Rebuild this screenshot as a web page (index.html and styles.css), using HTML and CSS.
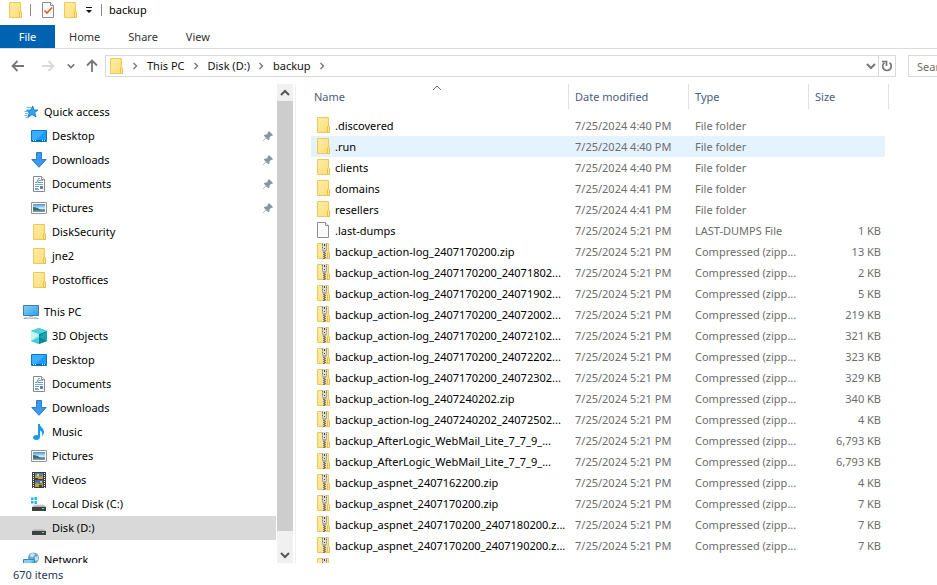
FILE: index.html
```
<!DOCTYPE html>
<html lang="en">
<head>
<meta charset="utf-8">
<title>backup</title>
<link rel="stylesheet" href="styles.css">
</head>
<body>
<svg class="sprite" aria-hidden="true">
  <defs>
    <linearGradient id="gFolder" x1="0" y1="0" x2="1" y2="1"><stop offset="0" stop-color="#ffeca6"/><stop offset="1" stop-color="#fddd77"/></linearGradient>
    <linearGradient id="gScreen" x1="0" y1="0" x2="1" y2="1"><stop offset="0" stop-color="#83d1fb"/><stop offset="1" stop-color="#2a9ff0"/></linearGradient>
    <linearGradient id="gDrive" x1="0" y1="0" x2="0" y2="1"><stop offset="0" stop-color="#d5d5d5"/><stop offset="1" stop-color="#a8a8a8"/></linearGradient>
    <linearGradient id="gPhoto" x1="0" y1="0" x2="0" y2="1"><stop offset="0" stop-color="#4a90dc"/><stop offset=".55" stop-color="#d6ecfa"/><stop offset="1" stop-color="#5d9bc4"/></linearGradient>
  </defs>
  <symbol id="folder" viewBox="0 0 16 16"><path d="M2.5.5h11v11h1v4h-12z" fill="url(#gFolder)" stroke="#edca58"/><path d="M12.5 15.5V9.8l1-.8 1 .8v5.7z" fill="#ffe79a" stroke="#e6c04a"/></symbol>
  <symbol id="zip" viewBox="0 0 16 16"><path d="M2.5.5h11v11h1v4h-12z" fill="url(#gFolder)" stroke="#edca58"/><path d="M12.5 15.5V9.8l1-.8 1 .8v5.7z" fill="#ffe79a" stroke="#e6c04a"/><path d="M7 0h5v7l-1 2H8L7 7z" fill="#a9a9a9"/><path d="M8 0h3v7H8z" fill="#dcdcdc"/><path d="M9 1h1v2H9zM9 5h1v1H9z" fill="#454545"/><path d="M7 1h1v1H7zM11 2h1v1h-1zM7 4h1v1H7z" fill="#777"/><path d="M8 9h2v1H8zM9 10h2v1H9zM8 11h2v1H8zM9 12h2v1H9zM8 13h2v1H8zM9 14h2v1H9zM8 15h2v1H8z" fill="#777"/><path d="M10 9h1v1h-1zM8 10h1v1H8zM10 11h1v1h-1zM8 12h1v1H8zM10 13h1v1h-1zM8 14h1v1H8z" fill="#cfcfcf"/></symbol>
  <symbol id="file" viewBox="0 0 16 16"><path d="M2.500.5h8l3 3v12h-11z" fill="#fafafa" stroke="#8e8e8e"/><path d="M10.500.5v3h3" fill="#fff" stroke="#8e8e8e"/></symbol>
  <symbol id="check" viewBox="0 0 16 16"><path d="M2.500.5h8l3 3v12h-11z" fill="#fafafa" stroke="#8c8c8c"/><path d="M10.500.5v3h3" fill="#fff" stroke="#8c8c8c"/><path d="M4.500 8.500 7 11l5-5.500" fill="none" stroke="#ec5b25" stroke-width="1.700"/></symbol>
  <symbol id="star" viewBox="0 0 16 16"><path d="m9.800 2 1.300 4H15l-3.200 2.500L13 13l-4-2.400L4.800 13.500 6.300 9 3.500 6.200l4-.2z" fill="#2ba6ee" stroke="#1272bb" stroke-width=".8"/><path d="M3.500 3.500h5M1.500 7.500h3.500M2.500 9.500h3M1.500 11.500h3M2.500 13.500H5" stroke="#69bde9"/></symbol>
  <symbol id="desktop" viewBox="0 0 16 16"><path d="M.5 2.500h15v11H.5z" fill="#199bf9" stroke="#0a76cb"/><path d="M1 3h13L5 12H1z" fill="#3badff"/><path d="M1 12h14v1H1z" fill="#0865b0"/><path d="M2 12h1v1H2zM4 12h1v1H4zM11 12h1v1h-1zM13 12h1v1h-1z" fill="#fff"/></symbol>
  <symbol id="download" viewBox="0 0 16 16"><path d="M5.500.5h5v7h4.700L8 15.300.8 7.500h4.700z" fill="#3b9af0" stroke="#2c7fca"/></symbol>
  <symbol id="document" viewBox="0 0 16 16"><path d="M2.500.5h8l3 3v12h-11z" fill="#fdfdfd" stroke="#8a8a8a"/><path d="M10.500.5v3h3" fill="#fff" stroke="#8a8a8a"/><path d="M7 2.500h2M8 4.500h4M4 8.500h8M4 13.500h4" stroke="#8aa3b7"/><path d="M4 6.500h2l1-3v3h5M4 10.500h4M4 12.500h3" fill="none" stroke="#5b9fd0"/><path d="M9 10h3v3H9z" fill="#568ea6"/></symbol>
  <symbol id="picture" viewBox="0 0 16 16"><path d="M.5 2.500h15v11H.5z" fill="#fff" stroke="#949494"/><path d="M2 4h12v8H2z" fill="url(#gPhoto)"/><path d="M2 7c3 0 5 1.500 7 2.300 2 .3 4 .2 5 .2V11H2z" fill="#3c7160"/><path d="M2 10.500h12V12H2z" fill="#6b9fc5"/></symbol>
  <symbol id="pc" viewBox="0 0 16 16"><path d="M.5 1.500h15v10H.5z" fill="url(#gScreen)" stroke="#4d7998"/><path d="M6 12h4v1H6z" fill="#b4c2cd"/><path d="M2 13.500h12l2 1.500H0z" fill="#8ea3b4"/><path d="M3 14h10" stroke="#dfe6eb"/></symbol>
  <symbol id="cube" viewBox="0 0 16 16"><path d="M0 3 8 0l8 3v10l-8 3-8-3z" fill="#20bccb"/><path d="m0 3 8 3v10l-8-3z" fill="#9ee8ed"/><path d="m0 3 8 3-8 7z" fill="#c9f4f5"/><path d="m0 13 8-4v7z" fill="#45ccd5"/><path d="m8 6 8-3v10l-8 3z" fill="#0b8495"/><path d="m16 3-8 6 8 4z" fill="#15a4b5"/><path d="m0 3 8-3 8 3-8 3z" fill="#4fd0dc"/></symbol>
  <symbol id="music" viewBox="0 0 16 16"><path d="M7 0h2c0 3.500 4 4 4 8 0 1.800-.8 3-2 4 .8-3-.2-5-2-5.500V13c0 2-1.800 3-3.800 3S2 15 2 13.500 3.500 11 5.500 11c.6 0 1 .1 1.500.3z" fill="#159bf0"/></symbol>
  <symbol id="video" viewBox="0 0 16 16"><path d="M1 0h14v16H1z" fill="#3d3d3d"/><path d="M4 1h8v6H4z" fill="#4b82c0"/><path d="M4 8h8v7H4z" fill="#416fa8"/><path d="M4 5c2-3 3-3 4-1s3 0 4-1v4H4zM4 12c2-2 3-2 4 0s3-1 4-1v4H4z" fill="#c69d3f"/><path d="M6 2h2v2H6zM9 9h2v2H9z" fill="#e3c758"/><path d="M4 6h3v1H4zM8 13h3v2H8z" fill="#3a4b35"/><path d="M2.500 1v15M13.500 1v15" stroke="#fff" stroke-dasharray="1 1"/></symbol>
  <symbol id="drive" viewBox="0 0 16 16"><path d="M3.500 8.500h9L15 11H1z" fill="url(#gDrive)"/><path d="M1 11h14v4H1z" fill="#3e4245"/><path d="M11 12h2v1h-2z" fill="#3cff47"/></symbol>
  <symbol id="osdrive" viewBox="0 0 16 16"><path d="M3.500 8.500h9L15 11H1z" fill="url(#gDrive)"/><path d="M1 11h14v4H1z" fill="#3e4245"/><path d="M11 12h2v1h-2z" fill="#3cff47"/><path d="M0 1.500h2.500V4H0zM3.500 1H6v3H3.500zM0 5h2.500v2.500H0zM3.500 5H6v3H3.500z" fill="#1fb8ee"/></symbol>
  <symbol id="network" viewBox="0 0 16 16"><circle cx="10.500" cy="6" r="5.500" fill="#69a9cc"/><path d="M7 3c1.500-2 3-2 4-1.500S12 4 10 5 7 4 7 3zM12 5l3-1v4l-3 1z" fill="#c8e3ef"/><path d="M.5 7.500h11v7H.5z" fill="#4fb2ea" stroke="#3a86b8"/><path d="M1 8h9l-5 6H1z" fill="#86cdf4"/></symbol>
  <symbol id="pin" viewBox="0 0 10 10"><path d="m6 0 4 4-1 1-.8-.2L6.500 6.500 6.300 8.500l-.8.8-2.300-2.100L.6 9.700 0 10l.3-.7 2.500-2.600L.7 4.500l.8-.8 2-.2L5.200 1.800 5 1z" fill="#8796a1"/></symbol>
  <symbol id="chevron" viewBox="0 0 8 8"><path d="m2.500 1 3 3-3 3" fill="none" stroke="currentColor" stroke-width="1.400"/></symbol>
  <symbol id="down" viewBox="0 0 10 10"><path d="m1 3 4 4 4-4" fill="none" stroke="currentColor" stroke-width="2"/></symbol>
  <symbol id="up" viewBox="0 0 10 10"><path d="m1 7 4-4 4 4" fill="none" stroke="currentColor" stroke-width="2"/></symbol>
  <symbol id="arrow" viewBox="0 0 14 14"><path d="M13 7H2M6.500 2 1.500 7l5 5" fill="none" stroke="currentColor" stroke-width="1.800"/></symbol>
  <symbol id="arrowup" viewBox="0 0 14 14"><path d="M7 13V2M2 6.500l5-5 5 5" fill="none" stroke="currentColor" stroke-width="1.800"/></symbol>
  <symbol id="refresh" viewBox="0 0 12 12"><path d="M8.500 2.700A4.300 4.300 0 1 1 3.500 2.700" fill="none" stroke="currentColor" stroke-width="1.700"/><path d="M1 1.500h4.500V6" fill="none" stroke="currentColor" stroke-width="1.700"/></symbol>
</svg>

<header class="titlebar">
  <svg class="icon"><use href="#folder"/></svg>
  <span class="divider"></span>
  <button class="tool" aria-label="Properties"><svg class="icon"><use href="#check"/></svg></button>
  <button class="tool" aria-label="New folder"><svg class="icon"><use href="#folder"/></svg></button>
  <button class="tool customize" aria-label="Customize toolbar"><svg width="8" height="6" viewBox="0 0 8 6"><path d="M1 0h6v1H1zM1 3h6L4 6z" fill="#111"/></svg></button>
  <span class="divider"></span>
  <h1 class="title">backup</h1>
</header>

<nav class="tabs">
  <button class="tab tab-file">File</button>
  <button class="tab">Home</button>
  <button class="tab">Share</button>
  <button class="tab">View</button>
</nav>

<div class="navbar">
  <button class="tool back" aria-label="Back"><svg class="arrow"><use href="#arrow"/></svg></button>
  <button class="tool forward" aria-label="Forward"><svg class="arrow flip"><use href="#arrow"/></svg></button>
  <button class="tool recent" aria-label="Recent"><svg class="small"><use href="#down"/></svg></button>
  <button class="tool parent" aria-label="Up"><svg class="arrow"><use href="#arrowup"/></svg></button>
  <div class="address">
    <svg class="icon"><use href="#folder"/></svg>
    <svg class="small"><use href="#chevron"/></svg>
    <a class="crumb" href="#">This PC</a>
    <svg class="small"><use href="#chevron"/></svg>
    <a class="crumb" href="#">Disk (D:)</a>
    <svg class="small"><use href="#chevron"/></svg>
    <a class="crumb" href="#">backup</a>
    <svg class="small"><use href="#chevron"/></svg>
    <button class="tool history" aria-label="Previous locations"><svg class="caret"><use href="#down"/></svg></button>
    <button class="tool refresh" aria-label="Refresh"><svg class="reload"><use href="#refresh"/></svg></button>
  </div>
  <input class="search" type="text" placeholder="Search backup" aria-label="Search backup">
</div>

<main class="body">
  <nav class="tree">
    <ul class="group">
      <li><a class="node root" href="#"><svg class="icon"><use href="#star"/></svg>Quick access</a></li>
      <li><a class="node" href="#"><svg class="icon"><use href="#desktop"/></svg>Desktop<svg class="pin"><use href="#pin"/></svg></a></li>
      <li><a class="node" href="#"><svg class="icon"><use href="#download"/></svg>Downloads<svg class="pin"><use href="#pin"/></svg></a></li>
      <li><a class="node" href="#"><svg class="icon"><use href="#document"/></svg>Documents<svg class="pin"><use href="#pin"/></svg></a></li>
      <li><a class="node" href="#"><svg class="icon"><use href="#picture"/></svg>Pictures<svg class="pin"><use href="#pin"/></svg></a></li>
      <li><a class="node" href="#"><svg class="icon"><use href="#folder"/></svg>DiskSecurity</a></li>
      <li><a class="node" href="#"><svg class="icon"><use href="#folder"/></svg>jne2</a></li>
      <li><a class="node" href="#"><svg class="icon"><use href="#folder"/></svg>Postoffices</a></li>
    </ul>
    <ul class="group">
      <li><a class="node root" href="#"><svg class="icon"><use href="#pc"/></svg>This PC</a></li>
      <li><a class="node" href="#"><svg class="icon"><use href="#cube"/></svg>3D Objects</a></li>
      <li><a class="node" href="#"><svg class="icon"><use href="#desktop"/></svg>Desktop</a></li>
      <li><a class="node" href="#"><svg class="icon"><use href="#document"/></svg>Documents</a></li>
      <li><a class="node" href="#"><svg class="icon"><use href="#download"/></svg>Downloads</a></li>
      <li><a class="node" href="#"><svg class="icon"><use href="#music"/></svg>Music</a></li>
      <li><a class="node" href="#"><svg class="icon"><use href="#picture"/></svg>Pictures</a></li>
      <li><a class="node" href="#"><svg class="icon"><use href="#video"/></svg>Videos</a></li>
      <li><a class="node" href="#"><svg class="icon"><use href="#osdrive"/></svg>Local Disk (C:)</a></li>
      <li><a class="node selected" href="#"><svg class="icon"><use href="#drive"/></svg>Disk (D:)</a></li>
    </ul>
    <ul class="group">
      <li><a class="node root" href="#"><svg class="icon"><use href="#network"/></svg>Network</a></li>
    </ul>
  </nav>
  <div class="scrollbar">
    <button class="tool step" aria-label="Scroll up"><svg class="caret"><use href="#up"/></svg></button>
    <div class="thumb"></div>
    <button class="tool step last" aria-label="Scroll down"><svg class="caret"><use href="#down"/></svg></button>
  </div>
  <section class="files">
    <table class="list">
      <colgroup><col class="c-name"><col class="c-date"><col class="c-type"><col class="c-size"></colgroup>
      <thead>
        <tr>
          <th><button class="head">Name<svg class="sort" viewBox="0 0 10 6"><path d="m1 5 4-4 4 4" fill="none" stroke="#666"/></svg></button></th>
          <th><button class="head">Date modified</button></th>
          <th><button class="head">Type</button></th>
          <th><button class="head">Size</button></th>
        </tr>
      </thead>
      <tbody>
        <tr><td><svg class="icon"><use href="#folder"/></svg>.discovered</td><td>7/25/2024 4:40 PM</td><td>File folder</td><td></td></tr>
        <tr class="hover"><td><svg class="icon"><use href="#folder"/></svg>.run</td><td>7/25/2024 4:40 PM</td><td>File folder</td><td></td></tr>
        <tr><td><svg class="icon"><use href="#folder"/></svg>clients</td><td>7/25/2024 4:40 PM</td><td>File folder</td><td></td></tr>
        <tr><td><svg class="icon"><use href="#folder"/></svg>domains</td><td>7/25/2024 4:41 PM</td><td>File folder</td><td></td></tr>
        <tr><td><svg class="icon"><use href="#folder"/></svg>resellers</td><td>7/25/2024 4:41 PM</td><td>File folder</td><td></td></tr>
        <tr><td><svg class="icon"><use href="#file"/></svg>.last-dumps</td><td>7/25/2024 5:21 PM</td><td>LAST-DUMPS File</td><td>1 KB</td></tr>
        <tr><td><svg class="icon"><use href="#zip"/></svg>backup_action-log_2407170200.zip</td><td>7/25/2024 5:21 PM</td><td>Compressed (zipp...</td><td>13 KB</td></tr>
        <tr><td><svg class="icon"><use href="#zip"/></svg>backup_action-log_2407170200_24071802...</td><td>7/25/2024 5:21 PM</td><td>Compressed (zipp...</td><td>2 KB</td></tr>
        <tr><td><svg class="icon"><use href="#zip"/></svg>backup_action-log_2407170200_24071902...</td><td>7/25/2024 5:21 PM</td><td>Compressed (zipp...</td><td>5 KB</td></tr>
        <tr><td><svg class="icon"><use href="#zip"/></svg>backup_action-log_2407170200_24072002...</td><td>7/25/2024 5:21 PM</td><td>Compressed (zipp...</td><td>219 KB</td></tr>
        <tr><td><svg class="icon"><use href="#zip"/></svg>backup_action-log_2407170200_24072102...</td><td>7/25/2024 5:21 PM</td><td>Compressed (zipp...</td><td>321 KB</td></tr>
        <tr><td><svg class="icon"><use href="#zip"/></svg>backup_action-log_2407170200_24072202...</td><td>7/25/2024 5:21 PM</td><td>Compressed (zipp...</td><td>323 KB</td></tr>
        <tr><td><svg class="icon"><use href="#zip"/></svg>backup_action-log_2407170200_24072302...</td><td>7/25/2024 5:21 PM</td><td>Compressed (zipp...</td><td>329 KB</td></tr>
        <tr><td><svg class="icon"><use href="#zip"/></svg>backup_action-log_2407240202.zip</td><td>7/25/2024 5:21 PM</td><td>Compressed (zipp...</td><td>340 KB</td></tr>
        <tr><td><svg class="icon"><use href="#zip"/></svg>backup_action-log_2407240202_24072502...</td><td>7/25/2024 5:21 PM</td><td>Compressed (zipp...</td><td>4 KB</td></tr>
        <tr><td><svg class="icon"><use href="#zip"/></svg>backup_AfterLogic_WebMail_Lite_7_7_9_...</td><td>7/25/2024 5:21 PM</td><td>Compressed (zipp...</td><td>6,793 KB</td></tr>
        <tr><td><svg class="icon"><use href="#zip"/></svg>backup_AfterLogic_WebMail_Lite_7_7_9_...</td><td>7/25/2024 5:21 PM</td><td>Compressed (zipp...</td><td>6,793 KB</td></tr>
        <tr><td><svg class="icon"><use href="#zip"/></svg>backup_aspnet_2407162200.zip</td><td>7/25/2024 5:21 PM</td><td>Compressed (zipp...</td><td>4 KB</td></tr>
        <tr><td><svg class="icon"><use href="#zip"/></svg>backup_aspnet_2407170200.zip</td><td>7/25/2024 5:21 PM</td><td>Compressed (zipp...</td><td>7 KB</td></tr>
        <tr><td><svg class="icon"><use href="#zip"/></svg>backup_aspnet_2407170200_2407180200.z...</td><td>7/25/2024 5:21 PM</td><td>Compressed (zipp...</td><td>7 KB</td></tr>
        <tr><td><svg class="icon"><use href="#zip"/></svg>backup_aspnet_2407170200_2407190200.z...</td><td>7/25/2024 5:21 PM</td><td>Compressed (zipp...</td><td>7 KB</td></tr>
        <tr><td><svg class="icon"><use href="#zip"/></svg>backup_aspnet_2407170200_2407200200.z...</td><td>7/25/2024 5:21 PM</td><td>Compressed (zipp...</td><td>7 KB</td></tr>
      </tbody>
    </table>
  </section>
</main>

<footer class="status">670 items</footer>
</body>
</html>
```
FILE: styles.css
```
* { box-sizing: border-box; }

body {
  margin: 0;
  height: 100vh;
  display: flex;
  flex-direction: column;
  overflow: hidden;
  background: #fff;
  color: #000;
  font: 11px/16px "Noto Sans", "Open Sans", sans-serif;
}

a { color: inherit; text-decoration: none; }
button, input { font: inherit; color: inherit; }
svg { flex: none; }

.sprite { position: absolute; width: 0; height: 0; }
.icon { width: 16px; height: 16px; }
.small { width: 8px; height: 8px; }

.tool {
  display: flex;
  align-items: center;
  justify-content: center;
  border: 0;
  padding: 0;
  background: none;
}

/* Title bar */
.titlebar {
  display: flex;
  align-items: center;
  height: 25px;
  padding: 0 7px 6px;
}
.divider { width: 1px; height: 12px; background: #8c8c8c; margin: 0 9px 0 7px; }
.titlebar .tool { margin-right: 6px; }
.titlebar .customize { width: 10px; margin: 0; }
.titlebar .customize ~ .divider { margin-right: 7px; }
.title { margin: 0; font-size: 11px; font-weight: 400; }

/* Ribbon tabs */
.tabs { display: flex; height: 24px; border-bottom: 1px solid #dadbdc; }
.tab { border: 0; background: none; padding: 0 14px; color: #333; }
.tab-file { width: 55px; padding: 0; background: #0063b1; color: #fff; }

/* Navigation bar */
.navbar { display: flex; align-items: center; padding: 6px 0 7px 11px; color: #777; }
.arrow { width: 14px; height: 14px; }
.flip { transform: scaleX(-1); }
.forward { margin-left: 16px; color: #d8d8d8; }
.recent { margin-left: 12px; }
.parent { margin: 0 6px 0 10px; }
.address {
  flex: 1;
  display: flex;
  align-items: center;
  height: 22px;
  border: 1px solid #d9d9d9;
  padding-left: 2px;
}
.address .small { margin: 0 8px 0 7px; }
.crumb { color: #111; }
.history { margin-left: auto; padding-right: 2px; }
.caret { width: 10px; height: 10px; }
.refresh { width: 17px; height: 20px; border-left: 1px solid #d9d9d9; }
.reload { width: 12px; height: 12px; }
.search {
  width: 29px;
  height: 22px;
  margin-left: 12px;
  border: 1px solid #d9d9d9;
  border-right: 0;
  border-radius: 0;
  padding: 0 0 0 8px;
  background: #fff;
}
.search::placeholder { color: #6d6d6d; }

/* Body */
.body { flex: 1; min-height: 0; display: flex; }

.tree { flex: none; width: 277px; padding-top: 16px; overflow: hidden; }
.group { list-style: none; margin: 0 0 8px; padding: 0; }
.node { display: flex; align-items: center; gap: 5px; height: 24px; padding-left: 31px; }
.root { padding-left: 23px; }
.selected { background: #d9d9d9; margin-right: 1px; }
.pin { width: 10px; height: 10px; margin: 0 4px 0 auto; }

.scrollbar { flex: none; width: 16px; display: flex; flex-direction: column; background: #f0f0f0; color: #555; }
.step { height: 17px; }
.thumb { flex: 1; background: #cdcdcd; }
.scrollbar .last { height: 32px; padding-top: 16px; }

/* File list */
.files { flex: 1; min-width: 0; margin-left: 2px; padding-left: 15px; border-left: 1px solid #f0f0f0; overflow: hidden; }
.list { width: 578px; table-layout: fixed; border-collapse: separate; border-spacing: 0; }
.c-name { width: 258px; }
.c-date, .c-type { width: 120px; }
.list th { padding: 0 0 6px; font-weight: 400; }
.head {
  display: flex;
  align-items: center;
  width: 100%;
  height: 25px;
  border: 0;
  border-right: 1px solid #e2e2e2;
  padding: 0 0 0 6px;
  background: none;
  color: #4c607a;
}
.list th:first-child .head { padding-left: 3px; }
.sort { width: 10px; height: 6px; margin: 0 auto 18px 87px; }

.list td { height: 21px; padding: 0 0 0 6px; line-height: 21px; color: #6d6d6d; white-space: nowrap; overflow: hidden; }
.list td:first-child { padding-left: 4px; color: #000; }
.list td:last-child { border-right: 4px solid transparent; padding: 0 4px 0 0; text-align: right; background-clip: padding-box; }
.list .icon { display: inline-block; vertical-align: top; margin: 2px 4px 0 0; }
.hover td { background-color: #e5f3ff; }

.status { height: 22px; padding: 4px 13px; color: #1e395b; }
```
